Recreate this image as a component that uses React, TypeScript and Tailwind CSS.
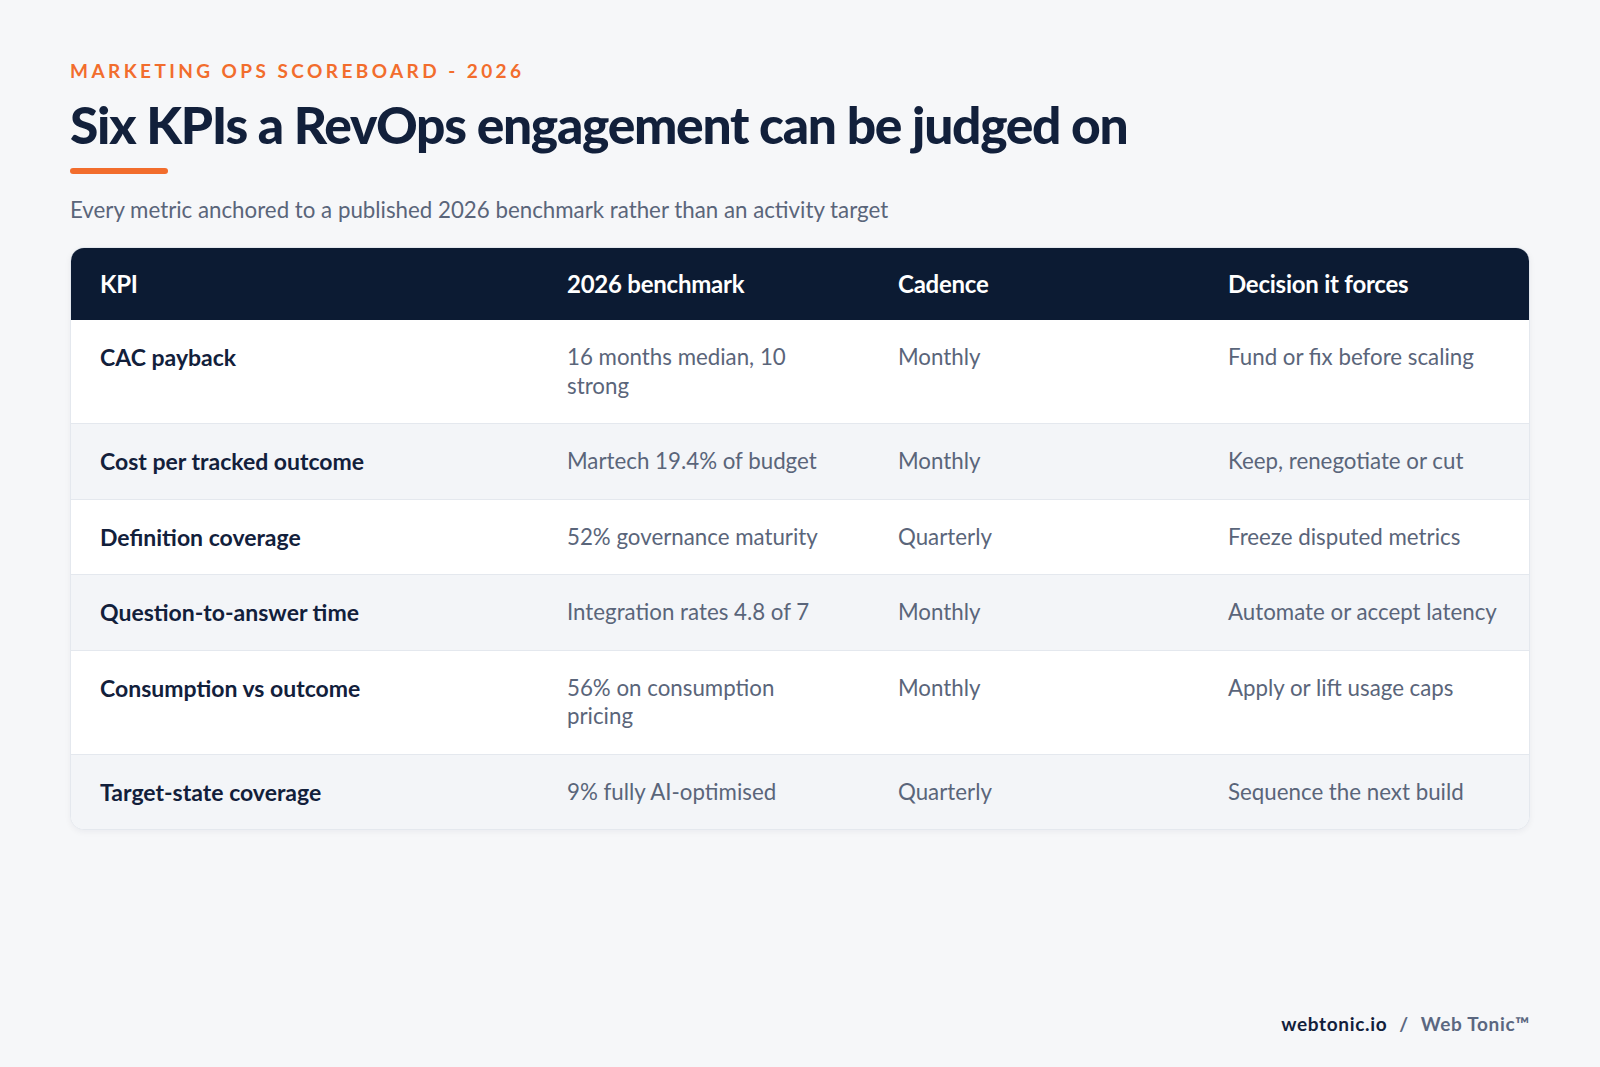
const rows = [
  { kpi: "CAC payback", bench: "16 months median, 10 strong", cadence: "Monthly", decision: "Fund or fix before scaling" },
  { kpi: "Cost per tracked outcome", bench: "Martech 19.4% of budget", cadence: "Monthly", decision: "Keep, renegotiate or cut" },
  { kpi: "Definition coverage", bench: "52% governance maturity", cadence: "Quarterly", decision: "Freeze disputed metrics" },
  { kpi: "Question-to-answer time", bench: "Integration rates 4.8 of 7", cadence: "Monthly", decision: "Automate or accept latency" },
  { kpi: "Consumption vs outcome", bench: "56% on consumption pricing", cadence: "Monthly", decision: "Apply or lift usage caps" },
  { kpi: "Target-state coverage", bench: "9% fully AI-optimised", cadence: "Quarterly", decision: "Sequence the next build" },
];

const cols = "grid grid-cols-[467px_331px_330px_332px]";

export default function App() {
  return (
    <div className="min-h-[1067px] w-full bg-[#f6f7f9] font-['Lato','Noto_Sans',sans-serif] flex flex-col px-[70px] pt-[58px] pb-[29px]">
      <div className="text-[19px] font-bold tracking-[0.18em] text-[#f26d2d] leading-[26px]">MARKETING OPS SCOREBOARD - 2026</div>
      <h1 className="mt-[10px] text-[51.5px] font-black tracking-[-0.025em] text-[#12203b] leading-[60px]">
        Six KPIs a RevOps engagement can be judged on
      </h1>
      <div className="mt-[14px] h-[6px] w-[98px] rounded-full bg-[#f26d2d]" />
      <p className="mt-[22px] text-[22.3px] text-[#5a657a] leading-[28px]">
        Every metric anchored to a published 2026 benchmark rather than an activity target
      </p>

      <div className="mt-[23px] w-[1460px] rounded-[14px] border border-[#e4e8ee] bg-white overflow-hidden shadow-[0_2px_6px_rgba(15,27,51,0.05)]">
        <div className={`${cols} bg-[#0c1b33] h-[72px] items-center text-white text-[24px] font-bold tracking-[-0.01em]`}>
          <div className="px-[29px]">KPI</div>
          <div className="px-[29px]">2026 benchmark</div>
          <div className="px-[29px]">Cadence</div>
          <div className="px-[29px]">Decision it forces</div>
        </div>
        {rows.map((r, i) => (
          <div
            key={r.kpi}
            className={`${cols} py-[23px] text-[22.3px] leading-[28.5px] ${i % 2 === 1 ? "bg-[#f3f5f8]" : "bg-white"} ${i < rows.length - 1 ? "border-b border-[#e4e8ee]" : ""}`}
          >
            <div className="px-[29px] text-[23px] font-bold text-[#12203b]">{r.kpi}</div>
            <div className="px-[29px] text-[#5a657a]">{r.bench}</div>
            <div className="px-[29px] text-[#5a657a]">{r.cadence}</div>
            <div className="px-[29px] text-[#5a657a]">{r.decision}</div>
          </div>
        ))}
      </div>

      <div className="mt-auto w-[1460px] flex justify-end items-center text-[19px] font-bold tracking-[0.035em]">
        <span className="text-[#12203b]">webtonic.io</span>
        <span className="mx-[12px] text-[#5b6780]">/</span>
        <span className="text-[#5b6780]">Web Tonic™</span>
      </div>
    </div>
  );
}
